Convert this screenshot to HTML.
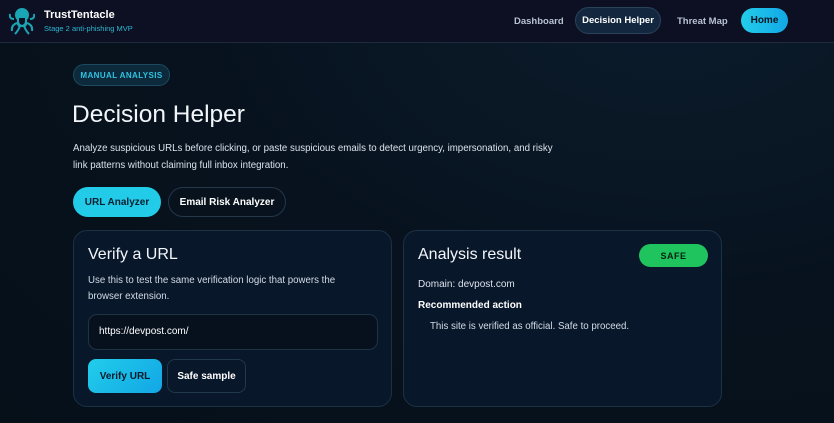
<!DOCTYPE html>
<html><head><meta charset="utf-8"><style>
*{box-sizing:border-box;margin:0;padding:0}
body{width:834px;height:423px;overflow:hidden;font-family:"Liberation Sans",sans-serif;background:radial-gradient(ellipse at 80% 0%,#0c1c2c 0%,#07121e 50%,#061019 100%);color:#e6edf5;position:relative}
.hdr{position:absolute;left:0;top:0;width:834px;height:43px;background:#0d1023;border-bottom:1px solid #1f2a3c}
.abs{position:absolute}
.pill{position:absolute;border-radius:999px;font-weight:bold;display:flex;align-items:center;justify-content:center}
.card{position:absolute;top:230px;width:319px;height:177px;border:1px solid #1d3144;border-radius:14px;background:#09172a}
</style></head><body>
<div class="hdr">
<svg class="abs" style="left:9px;top:7px" width="26" height="28" viewBox="0 0 26 28" fill="#1aa5b5"><circle cx="13" cy="8" r="7"/><rect x="8" y="10" width="10" height="10" rx="3"/><path d="M8 16 Q2 18 3 24 M5 12 Q0 12 1 7 M18 16 Q24 18 23 24 M21 12 Q26 12 25 7 M11 19 Q9 24 6 27 M15 19 Q17 24 20 27" stroke="#1aa5b5" stroke-width="2" fill="none"/><path d="M10 11 h6 v3 q0 3 -3 4 q-3 -1 -3 -4z" fill="#0d1023"/></svg>
<div class="abs" style="left:44px;top:9px;font-size:11px;font-weight:bold;color:#fff">TrustTentacle</div>
<div class="abs" style="left:44px;top:24px;font-size:7.5px;color:#2ab7d0">Stage 2 anti-phishing MVP</div>
<div class="abs" style="left:514px;top:16px;font-size:9.5px;font-weight:bold;color:#b8c2d2">Dashboard</div>
<div class="pill" style="left:575px;top:7px;width:86px;height:27px;background:#13283f;border:1px solid #2a425a;font-size:9.5px;color:#fff">Decision Helper</div>
<div class="abs" style="left:677px;top:16px;font-size:9.5px;font-weight:bold;color:#b8c2d2">Threat Map</div>
<div class="pill" style="left:741px;top:8px;width:47px;height:25px;background:linear-gradient(90deg,#22cdea,#12a8e6);font-size:10px;color:#061422">Home</div>
</div>
<div class="pill" style="left:73px;top:64px;width:97px;height:22px;background:#0c2a3c;border:1px solid #1d4a5e;font-size:8px;color:#2fc3e0;letter-spacing:.4px">MANUAL ANALYSIS</div>
<div class="abs" style="left:72px;top:101px;font-size:24.5px;color:#f2f6fa">Decision Helper</div>
<div class="abs" style="left:73px;top:140px;width:500px;font-size:9.7px;line-height:17px;color:#dbe3ec">Analyze suspicious URLs before clicking, or paste suspicious emails to detect urgency, impersonation, and risky<br>link patterns without claiming full inbox integration.</div>
<div class="pill" style="left:73px;top:187px;width:88px;height:30px;background:#22cce8;font-size:10px;color:#082030">URL Analyzer</div>
<div class="pill" style="left:168px;top:187px;width:118px;height:30px;border:1px solid #24384c;font-size:10px;color:#fff">Email Risk Analyzer</div>
<div class="card" style="left:73px">
<div class="abs" style="left:14px;top:15px;font-size:16px;color:#f2f6fa">Verify a URL</div>
<div class="abs" style="left:14px;top:42px;width:280px;font-size:9.7px;line-height:16px;color:#d3dce6">Use this to test the same verification logic that powers the<br>browser extension.</div>
<div class="abs" style="left:14px;top:83px;width:290px;height:36px;border:1px solid #1f3347;border-radius:9px;background:#07111e;font-size:10px;color:#fff;padding:11px 0 0 10px">https://devpost.com/</div>
<div class="abs" style="left:14px;top:128px;width:74px;height:34px;border-radius:8px;background:linear-gradient(135deg,#22cdea,#12a6e5);font-size:10px;font-weight:bold;color:#071a2a;display:flex;align-items:center;justify-content:center">Verify URL</div>
<div class="abs" style="left:93px;top:128px;width:79px;height:34px;border-radius:8px;border:1px solid #22384c;font-size:10px;font-weight:bold;color:#fff;display:flex;align-items:center;justify-content:center">Safe sample</div>
</div>
<div class="card" style="left:403px">
<div class="abs" style="left:14px;top:15px;font-size:16px;color:#f2f6fa">Analysis result</div>
<div class="pill" style="left:235px;top:13px;width:69px;height:23px;background:#20c45f;font-size:9px;color:#06200f;letter-spacing:.5px">SAFE</div>
<div class="abs" style="left:14px;top:48px;font-size:10px;color:#dbe3ec">Domain: devpost.com</div>
<div class="abs" style="left:14px;top:69px;font-size:10px;font-weight:bold;color:#fff">Recommended action</div>
<div class="abs" style="left:26px;top:90px;font-size:9.7px;color:#d3dce6">This site is verified as official. Safe to proceed.</div>
</div>
</body></html>
